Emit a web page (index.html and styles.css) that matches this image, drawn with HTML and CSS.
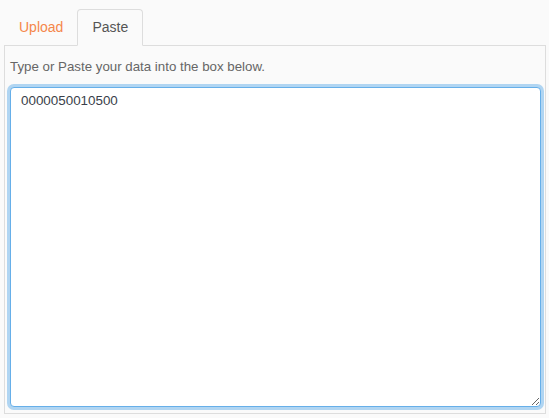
FILE: index.html
```html
<!DOCTYPE html>
<html>
<head>
<meta charset="utf-8">
<link rel="stylesheet" href="styles.css">
</head>
<body>
<div class="wrap">
  <ul class="tabs">
    <li class="tab"><a class="tab-link">Upload</a></li>
    <li class="tab active"><a class="tab-link">Paste</a></li>
  </ul>
  <div class="panel">
    <p class="hint">Type or Paste your data into the box below.</p>
    <textarea class="input" autofocus>0000050010500</textarea>
  </div>
</div>
</body>
</html>
```
FILE: styles.css
```css
* { box-sizing: border-box; }
html, body { margin: 0; padding: 0; background: #fafafa; }
body { font-family: "Liberation Sans", Arial, sans-serif; }
.wrap { padding: 9px 3px 4px 4px; }
.tabs {
  list-style: none; margin: 0; padding: 0;
  display: flex; height: 36px;
}
.tab { display: flex; }
.tab-link {
  display: block; padding: 0 13px 0 14px; line-height: 34px;
  font-size: 14px; color: #f5874a;
  border: 1px solid transparent; border-radius: 4px 4px 0 0;
  margin-bottom: -1px; position: relative;
}
.tab.active .tab-link {
  color: #555; background: #fafafa;
  border-color: #ddd #ddd transparent #ddd;
  line-height: 35px; padding: 0 14px;
}
.panel {
  border: 1px solid #ddd;
  padding: 13px 4px 6px 5px;
  height: 369px; display: flex; flex-direction: column;
}
.hint { margin: 0 0 13px 0; font-size: 13.3px; line-height: 15px; color: #666; }
.input {
  flex: 1; width: 100%; resize: vertical;
  border: 1px solid #66afe9; border-radius: 4px;
  outline: none; background: #fff;
  box-shadow: 0 0 0 3px rgba(102,175,233,0.5);
  font-family: "Liberation Sans", Arial, sans-serif; font-size: 13.4px; color: #3a3f4a;
  padding: 5px 10px;
}
```
